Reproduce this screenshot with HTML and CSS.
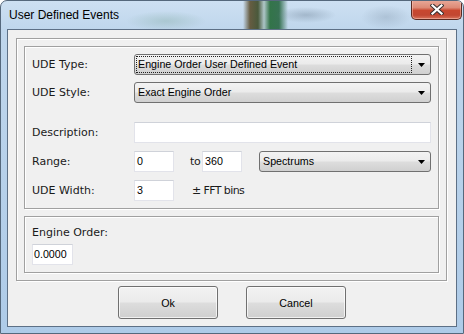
FILE: index.html
```html
<!DOCTYPE html>
<html>
<head>
<meta charset="utf-8">
<link rel="stylesheet" href="styles.css">
</head>
<body>
<div class="window">
  <div class="titlebar">
    <span class="title">User Defined Events</span>
    <div class="close">
      <svg width="14" height="11" viewBox="0 0 14 11">
        <path d="M2.5 1.5L11.5 9.5M11.5 1.5L2.5 9.5" stroke="#3a3030" stroke-width="4.2" stroke-linecap="square"/>
        <path d="M2.5 1.5L11.5 9.5M11.5 1.5L2.5 9.5" stroke="#ffffff" stroke-width="2.2" stroke-linecap="square"/>
      </svg>
    </div>
  </div>
  <div class="client">
    <div class="group outer">
      <div class="group box1">
        <div class="row r1">
          <span class="label">UDE Type:</span>
          <div class="combo wide">
            <span class="combo-text focus">Engine Order User Defined Event</span>
            <span class="arrow"><svg width="7" height="4" viewBox="0 0 7 4"><path d="M0 0H7L3.5 4Z" fill="#000"/></svg></span>
          </div>
        </div>
        <div class="row r2">
          <span class="label">UDE Style:</span>
          <div class="combo wide">
            <span class="combo-text">Exact Engine Order</span>
            <span class="arrow"><svg width="7" height="4" viewBox="0 0 7 4"><path d="M0 0H7L3.5 4Z" fill="#000"/></svg></span>
          </div>
        </div>
        <div class="row r3">
          <span class="label">Description:</span>
          <div class="textbox wide"></div>
        </div>
        <div class="row r4">
          <span class="label">Range:</span>
          <div class="textbox small">0</div>
          <span class="to">to</span>
          <div class="textbox small">360</div>
          <div class="combo spectrums">
            <span class="combo-text">Spectrums</span>
            <span class="arrow"><svg width="7" height="4" viewBox="0 0 7 4"><path d="M0 0H7L3.5 4Z" fill="#000"/></svg></span>
          </div>
        </div>
        <div class="row r5">
          <span class="label">UDE Width:</span>
          <div class="textbox small">3</div>
          <span class="bins">± FFT bins</span>
        </div>
      </div>
      <div class="group box2">
        <div class="label eo-label">Engine Order:</div>
        <div class="textbox eo">0.0000</div>
      </div>
    </div>
    <div class="buttons">
      <div class="button">Ok</div>
      <div class="button">Cancel</div>
    </div>
  </div>
</div>
</body>
</html>
```
FILE: styles.css
```css
html, body {
  margin: 0;
  padding: 0;
  background: #ffffff;
}

.window {
  width: 464px;
  height: 334px;
  box-sizing: border-box;
  border: 1px solid #55687c;
  border-radius: 7px 7px 0 0;
  position: relative;
  overflow: hidden;
  background:
    radial-gradient(ellipse 40px 10px at 165px 20px, rgba(150, 185, 185, 0.55), rgba(150, 185, 185, 0) 100%),
    radial-gradient(ellipse 30px 8px at 305px 14px, rgba(120, 140, 160, 0.45), rgba(120, 140, 160, 0) 100%),
    radial-gradient(ellipse 25px 12px at 385px 16px, rgba(130, 150, 170, 0.35), rgba(130, 150, 170, 0) 100%),
    linear-gradient(to right,
      rgba(0,0,0,0) 0px, rgba(0,0,0,0) 242px,
      rgba(85, 70, 35, 0.85) 249px, rgba(60, 75, 40, 0.9) 257px,
      rgba(150, 175, 160, 0.5) 263px,
      rgba(35, 105, 55, 0.9) 269px, rgba(30, 95, 55, 0.85) 278px,
      rgba(0,0,0,0) 287px, rgba(0,0,0,0) 100%) 0 0 / 100% 29px no-repeat,
    linear-gradient(to bottom, #cde0f2 0px, #bfd6ec 29px, #aecbe8 100%);
}

.titlebar {
  height: 28px;
  box-sizing: border-box;
  padding: 7px 0 0 8px;
}

.title {
  font-family: "Liberation Sans", Arial, sans-serif;
  font-size: 12px;
  line-height: 14px;
  color: #000000;
  display: block;
}

.close {
  position: absolute;
  top: -1px;
  right: 1px;
  width: 51px;
  height: 20px;
  box-sizing: border-box;
  border: 1px solid #5a2a22;
  border-top: none;
  border-radius: 0 0 5px 5px;
  background: linear-gradient(to bottom, #e9aa9a 0%, #dd8a76 40%, #c8472f 55%, #c24732 80%, #d9745c 100%);
  display: flex;
  align-items: center;
  justify-content: center;
  box-shadow: inset 0 0 0 1px rgba(255, 210, 200, 0.45);
}

.close svg {
  display: block;
  margin-top: -1px;
}

.client {
  margin: 0 6px;
  height: 298px;
  box-sizing: border-box;
  border: 1px solid #5d7086;
  background: #f0f0f0;
  padding-top: 8px;
  padding-left: 8px;
}

.group {
  box-sizing: border-box;
  border: 1px solid #a0a0a0;
  box-shadow: inset 1px 1px 0 #ffffff, 1px 1px 0 #ffffff;
}

.outer {
  width: 431px;
  height: 243px;
  padding: 7px;
  display: flex;
  flex-direction: column;
  gap: 7px;
}

.box1 {
  height: 163px;
  padding: 7px;
  display: flex;
  flex-direction: column;
}

.box2 {
  height: 57px;
  padding: 7px;
  display: flex;
  flex-direction: column;
  align-items: flex-start;
}

.row {
  display: flex;
  align-items: center;
  height: 21px;
}

.r2 { margin-top: 7px; }
.r3 { margin-top: 19px; }
.r4 { margin-top: 8px; }
.r5 { margin-top: 8px; }

.label {
  font-family: "DejaVu Sans", Verdana, sans-serif;
  font-size: 11px;
  line-height: 13px;
  color: #1a1a1a;
  width: 102px;
  flex: none;
}

.eo-label {
  width: auto;
  padding-top: 2px;
  margin-bottom: 5px;
}

.combo {
  height: 21px;
  box-sizing: border-box;
  border: 1px solid #707070;
  border-radius: 3px;
  background: linear-gradient(to bottom, #f3f3f3 0%, #ebebeb 48%, #dddddd 52%, #d0d0d0 100%);
  display: flex;
  align-items: stretch;
  padding: 1px;
  font-family: "Liberation Sans", Arial, sans-serif;
  font-size: 10.7px;
  color: #000000;
}

.wide {
  width: 297px;
}

.combo-text {
  flex: 1;
  box-sizing: border-box;
  border: 1px solid transparent;
  padding-left: 1px;
  line-height: 15px;
  white-space: nowrap;
  overflow: hidden;
}

.combo-text.focus {
  border: 1px dotted #202020;
}

.arrow {
  width: 17px;
  flex: none;
  display: flex;
  align-items: center;
  justify-content: center;
  padding-left: 1px;
  box-sizing: border-box;
}

.arrow svg {
  display: block;
}

.textbox {
  height: 21px;
  box-sizing: border-box;
  border: 1px solid #e2e3ea;
  border-top-color: #cfd2d9;
  background: #ffffff;
  font-family: "Liberation Sans", Arial, sans-serif;
  font-size: 10.7px;
  line-height: 19px;
  padding-left: 2px;
  color: #000000;
}

.small {
  width: 40px;
  flex: none;
}

.to {
  font-family: "DejaVu Sans", Verdana, sans-serif;
  font-size: 11px;
  line-height: 13px;
  color: #1a1a1a;
  width: 28px;
  box-sizing: border-box;
  padding-left: 16px;
  letter-spacing: -0.4px;
  white-space: nowrap;
  flex: none;
}

.spectrums {
  width: 172px;
  margin-left: 17px;
}

.bins {
  font-family: "DejaVu Sans", Verdana, sans-serif;
  font-size: 11px;
  line-height: 13px;
  color: #1a1a1a;
  margin-left: 18px;
  letter-spacing: -0.6px;
  white-space: nowrap;
}

.eo {
  width: 41px;
  padding-left: 1px;
}

.buttons {
  width: 448px;
  margin-left: -8px;
  margin-top: 5px;
  display: flex;
  justify-content: center;
  gap: 28px;
}

.button {
  width: 100px;
  height: 33px;
  box-sizing: border-box;
  border: 1px solid #707070;
  border-radius: 3px;
  background: linear-gradient(to bottom, #f2f2f2 0%, #ebebeb 48%, #dddddd 52%, #cfcfcf 100%);
  box-shadow: inset 0 0 0 1px rgba(255, 255, 255, 0.7);
  font-family: "Liberation Sans", Arial, sans-serif;
  font-size: 10.7px;
  color: #000000;
  display: flex;
  align-items: center;
  justify-content: center;
}
```
